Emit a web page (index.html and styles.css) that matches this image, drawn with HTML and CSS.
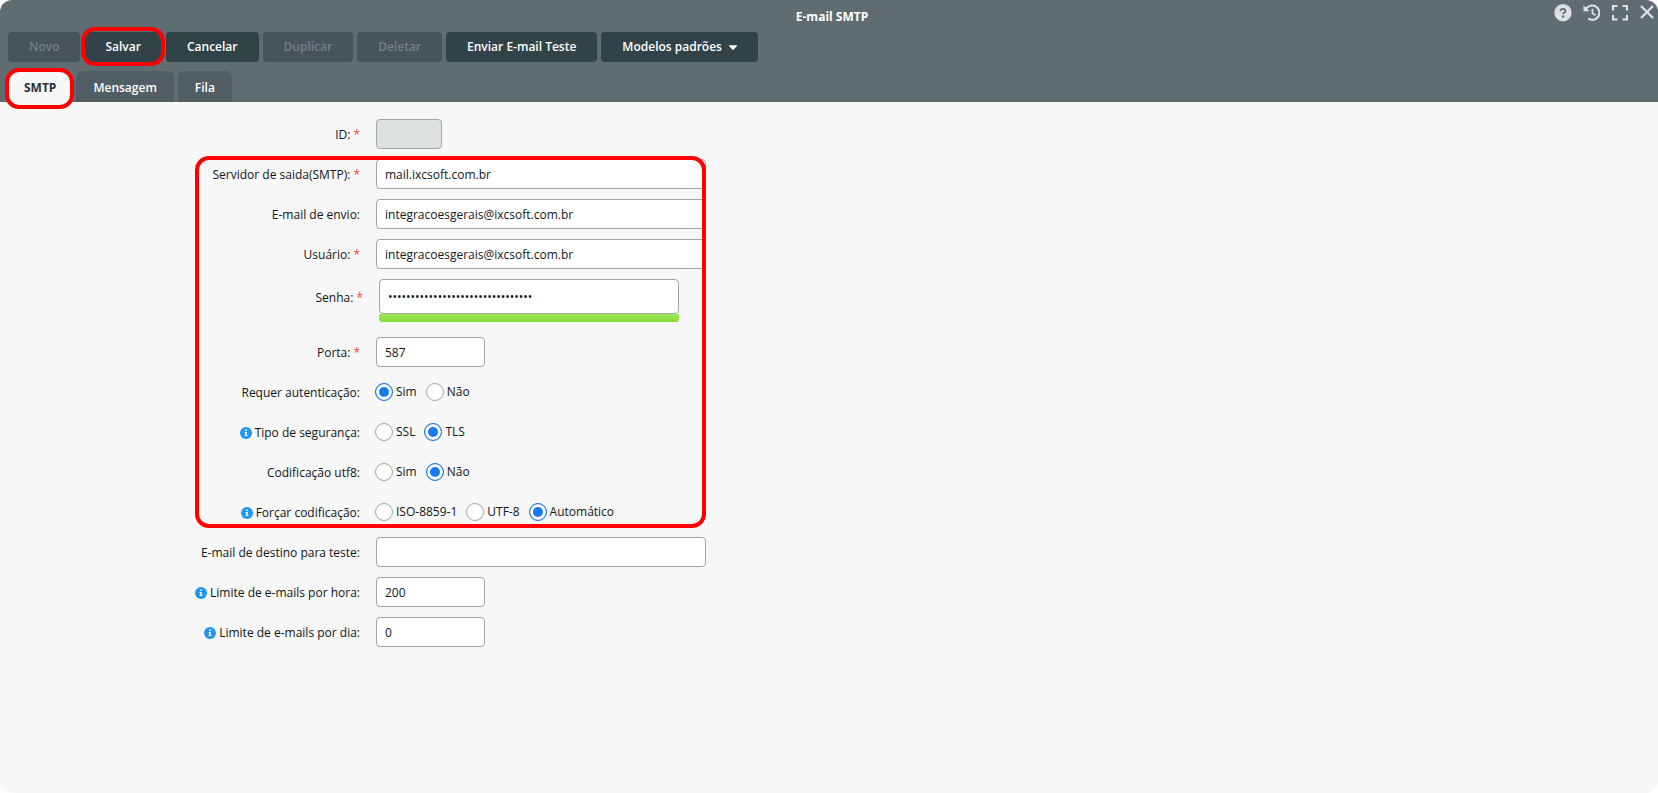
FILE: index.html
```html
<!DOCTYPE html>
<html lang="pt-BR">
<head>
<meta charset="utf-8">
<title>E-mail SMTP</title>
<link rel="stylesheet" href="styles.css">
</head>
<body>
<svg class="sprite" aria-hidden="true">
  <symbol id="info" viewBox="0 0 12 12">
    <circle cx="6" cy="6" r="6" fill="#2196f3"/>
    <path d="M5.1 2.4h1.8v1.5H5.1zM4.5 5h2.3v3.1h.7v1H4.5v-1h.7V6h-.7z" fill="#f7f7f7"/>
  </symbol>
</svg>
<main class="window">
  <header class="header">
    <div class="titlebar">
      <h1 class="title">E-mail SMTP</h1>
      <div class="tools">
        <button class="tool" type="button" aria-label="Ajuda">
          <svg width="18" height="18" viewBox="0 0 18 18"><circle cx="9" cy="8.700" r="8.700" fill="#dce0e1"/><path d="M6.500 7C6.500 5.600 7.600 4.800 9 4.800s2.400.8 2.400 2.100c0 1.500-2.300 1.600-2.300 3.200" fill="none" stroke="#5f6c72" stroke-width="1.8"/><circle cx="9.1" cy="12.500" r="1.2" fill="#5f6c72"/></svg>
        </button>
        <button class="tool" type="button" aria-label="Histórico">
          <svg width="18" height="18" viewBox="0 0 18 18" fill="none" stroke="#dce0e1" stroke-width="2.1"><path d="M4 5A7.200 7.200 0 1 1 6.200 14.700"/><path d="M10.500 4.700v4.600l3 1.900" stroke-width="1.8"/><path d="M1.500 1.200v6h6z" fill="#dce0e1" stroke="none"/></svg>
        </button>
        <button class="tool" type="button" aria-label="Tela cheia">
          <svg width="18" height="18" viewBox="0 0 18 18" fill="none" stroke="#dce0e1" stroke-width="2.2"><path d="M3 6.500V2H7.500M12.500 2h4.500V6.500M17 11v4.500H12.500M7.500 15.500H3V11"/></svg>
        </button>
        <button class="tool" type="button" aria-label="Fechar">
          <svg width="18" height="18" viewBox="0 0 18 18" fill="none" stroke="#dce0e1" stroke-width="2.3"><path d="M3 2l12 12M15 2l-12 12"/></svg>
        </button>
      </div>
    </div>
    <div class="toolbar">
      <button class="btn" type="button" disabled>Novo</button>
      <button class="btn marked" type="button">Salvar</button>
      <button class="btn" type="button">Cancelar</button>
      <button class="btn" type="button" disabled>Duplicar</button>
      <button class="btn" type="button" disabled>Deletar</button>
      <button class="btn" type="button">Enviar E-mail Teste</button>
      <button class="btn" type="button">Modelos padrões <svg class="caret" width="8" height="5" viewBox="0 0 8 5"><path d="M0 .2h8v.8L4.400 4.800h-.8L0 1z" fill="#fff"/></svg></button>
    </div>
    <div class="tabs" role="tablist">
      <button class="tab active marked" type="button" role="tab" aria-selected="true">SMTP</button>
      <button class="tab" type="button" role="tab">Mensagem</button>
      <button class="tab" type="button" role="tab">Fila</button>
    </div>
  </header>
  <form class="form">
    <div class="row"><label class="label" for="id">ID: <span class="req">*</span></label><input class="field tiny" id="id" type="text" disabled></div>
    <div class="group">
      <div class="row"><label class="label" for="server">Servidor de saida(SMTP): <span class="req">*</span></label><input class="field" id="server" type="text" value="mail.ixcsoft.com.br"></div>
      <div class="row"><label class="label" for="from">E-mail de envio:</label><input class="field" id="from" type="text" value="integracoesgerais@ixcsoft.com.br"></div>
      <div class="row"><label class="label" for="user">Usuário: <span class="req">*</span></label><input class="field" id="user" type="text" value="integracoesgerais@ixcsoft.com.br"></div>
      <div class="row password"><label class="label" for="pass">Senha: <span class="req">*</span></label><div class="secret"><input class="field" id="pass" type="password" value="12345678901234567890123456789012"><div class="strength"></div></div></div>
      <div class="row"><label class="label" for="port">Porta: <span class="req">*</span></label><input class="field small" id="port" type="text" value="587"></div>
      <div class="row" role="radiogroup" aria-labelledby="l-auth"><span class="label" id="l-auth">Requer autenticação:</span><div class="options">
        <label class="option"><input class="radio" type="radio" name="auth" checked>Sim</label><label class="option"><input class="radio" type="radio" name="auth">Não</label></div></div>
      <div class="row" role="radiogroup" aria-labelledby="l-sec"><span class="label" id="l-sec"><svg class="info"><use href="#info"/></svg>Tipo de segurança:</span><div class="options">
        <label class="option"><input class="radio" type="radio" name="sec">SSL</label><label class="option"><input class="radio" type="radio" name="sec" checked>TLS</label></div></div>
      <div class="row" role="radiogroup" aria-labelledby="l-utf"><span class="label" id="l-utf">Codificação utf8:</span><div class="options">
        <label class="option"><input class="radio" type="radio" name="utf">Sim</label><label class="option"><input class="radio" type="radio" name="utf" checked>Não</label></div></div>
      <div class="row" role="radiogroup" aria-labelledby="l-force"><span class="label" id="l-force"><svg class="info"><use href="#info"/></svg>Forçar codificação:</span><div class="options">
        <label class="option"><input class="radio" type="radio" name="force">ISO-8859-1</label><label class="option"><input class="radio" type="radio" name="force">UTF-8</label><label class="option"><input class="radio" type="radio" name="force" checked>Automático</label></div></div>
    </div>
    <div class="row"><label class="label" for="test">E-mail de destino para teste:</label><input class="field" id="test" type="text"></div>
    <div class="row"><label class="label" for="hour"><svg class="info"><use href="#info"/></svg>Limite de e-mails por hora:</label><input class="field small" id="hour" type="text" value="200"></div>
    <div class="row"><label class="label" for="day"><svg class="info"><use href="#info"/></svg>Limite de e-mails por dia:</label><input class="field small" id="day" type="text" value="0"></div>
  </form>
</main>
</body>
</html>
```
FILE: styles.css
```css
* { box-sizing: border-box; }

body {
  margin: 0;
  background: #fff;
  color: #111618;
  font: 12px/18px "Open Sans", "Noto Sans", sans-serif;
}

button, input { font: inherit; }

.sprite { position: absolute; width: 0; height: 0; }

.window {
  min-height: 100vh;
  border-radius: 12px;
  background: #f7f7f7;
  overflow: hidden;
}

.header { background: #5f6c72; }

.titlebar {
  display: grid;
  grid-template-columns: 1fr auto 1fr;
  height: 32px;
  padding: 0 2px 0 8px;
}

.title {
  grid-column: 2;
  margin: 0;
  padding-top: 8px;
  color: #fff;
  font-size: 12px;
  font-weight: 700;
}

.tools {
  display: flex;
  justify-content: flex-end;
  align-items: flex-start;
  gap: 10px;
  padding-top: 4px;
}

.tool { padding: 0; border: 0; background: none; line-height: 0; }

.toolbar { display: flex; gap: 4px; padding: 0 8px; }

.btn {
  height: 30px;
  padding: 0 21px;
  border: 0;
  border-radius: 4px;
  background: #324249;
  color: #fff;
  font-weight: 600;
}

.btn:disabled { background: #47545b; color: #748086; }

.caret { margin-left: 4px; vertical-align: middle; }

.tabs { display: flex; gap: 4px; padding: 9px 8px 0; }

.tab {
  height: 31px;
  padding: 2px 17px 0;
  border: 0;
  border-radius: 6px 6px 0 0;
  background: #515e64;
  color: #fff;
  font-weight: 600;
}

.tab.active {
  padding: 2px 16px 0;
  background: #f7f7f7;
  color: #263238;
  font-weight: 700;
}

.marked { position: relative; }

.marked::after, .group::after {
  content: "";
  position: absolute;
  border: 4px solid #f00;
  border-radius: 14px;
  pointer-events: none;
}

.btn.marked::after { inset: -5px -3px -4px; }
.tab.marked::after { inset: -3px -2px -7px -3px; }
.group::after { inset: -3px 0 -1px 1px; }

.form, .group { display: flex; flex-direction: column; gap: 10px; }

.form { width: 512px; margin: 17px 0 0 194px; }

.group { position: relative; }

.row { display: flex; gap: 16px; min-height: 30px; }

.label {
  display: flex;
  justify-content: flex-end;
  align-items: center;
  gap: 3px;
  flex: 0 0 166px;
  height: 30px;
  padding-top: 2px;
  white-space: nowrap;
}

.req { color: #f44336; }

.info { flex: none; width: 12px; height: 12px; }

.field {
  width: 330px;
  height: 30px;
  padding: 0 8px;
  border: 1px solid #9ea7ac;
  border-radius: 4px;
  background: #fff;
  color: #111618;
}

.field.tiny { width: 66px; }
.field.small { width: 109px; }
.field:disabled { background: #dce0e1; }

.password { height: 48px; padding-left: 3px; }
.password .label { height: 35px; }
.password .field { display: block; width: 300px; height: 35px; }

.strength {
  height: 8px;
  border-radius: 0 0 3px 3px;
  background: linear-gradient(#9be65a, #86df35);
}

.options { display: flex; align-items: center; gap: 9px; margin-left: -1px; }

.option { display: flex; align-items: center; gap: 3px; }

.radio {
  appearance: none;
  width: 18px;
  height: 18px;
  margin: 0;
  border: 1px solid #9ea7ac;
  border-radius: 50%;
  background: #fff;
}

.radio:checked {
  border-color: #1877f2;
  background: #1877f2;
  box-shadow: inset 0 0 0 3px #fff;
}
```
